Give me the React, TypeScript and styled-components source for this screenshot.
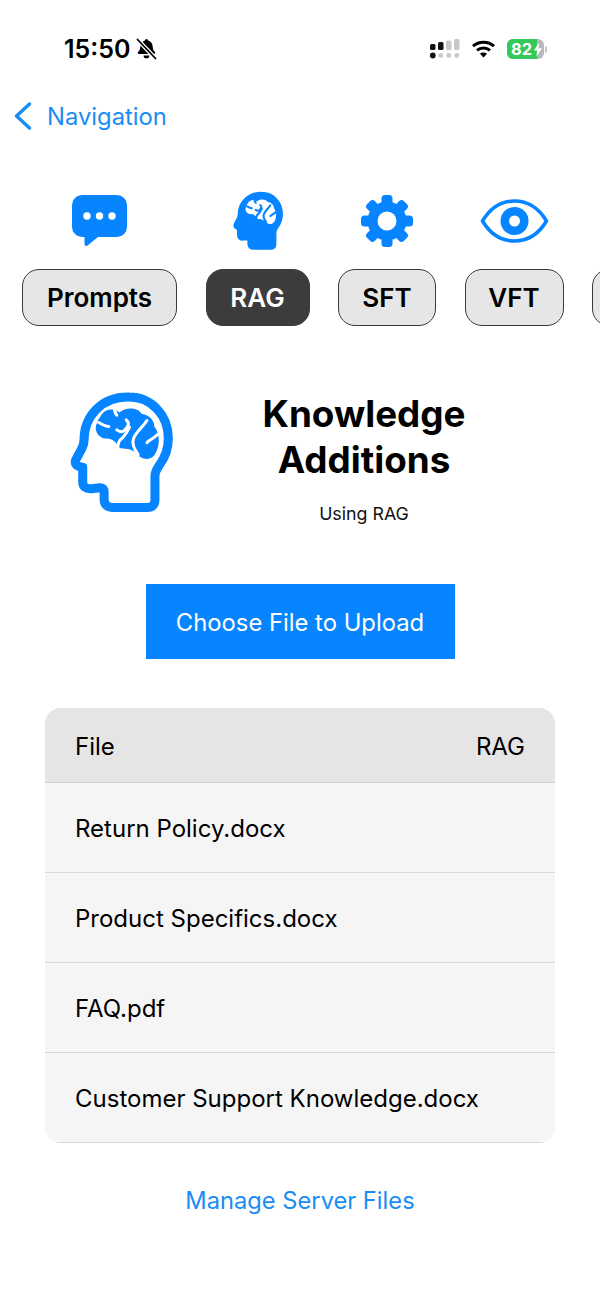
import * as React from "react";
import styled, { createGlobalStyle } from "styled-components";

const blue = "#0784ff";
const linkBlue = "#1a8cf3";

const GlobalStyle = createGlobalStyle`
  html, body {
    margin: 0;
    padding: 0;
    background: #ffffff;
    font-family: Inter, "Liberation Sans", sans-serif;
    color: #000000;
  }
`;

const Screen = styled.div`
  width: 600px;
  height: 1299px;
  overflow: hidden;
  display: flex;
  flex-direction: column;
`;

const StatusBar = styled.div`
  height: 38px;
  padding: 30px 53px 0 64px;
  display: flex;
  align-items: center;
  justify-content: space-between;
`;

const StatusLeft = styled.div`
  display: flex;
  align-items: center;
  gap: 6px;
`;

const Time = styled.span`
  font-size: 25px;
  font-weight: 600;
`;

const StatusRight = styled.div`
  display: flex;
  align-items: center;
  gap: 11px;
`;

const Battery = styled.div`
  position: relative;
  width: 37px;
  height: 20px;
  border-radius: 6px;
  overflow: hidden;
  background: #b8b8b8;
  display: flex;
`;

const BatteryFill = styled.div`
  width: 82%;
  background: #34c759;
`;

const BatteryText = styled.span`
  position: absolute;
  left: 4px;
  top: 0;
  line-height: 20px;
  font-size: 16.5px;
  font-weight: 700;
  color: #ffffff;
`;

const BatteryWrap = styled.div`
  display: flex;
  align-items: center;
  gap: 1px;
`;

const BatteryNub = styled.div`
  width: 2px;
  height: 7px;
  border-radius: 0 2px 2px 0;
  background: #c4c4c4;
`;

const NavBar = styled.div`
  margin-top: 26px;
  height: 44px;
  padding-left: 14px;
  display: flex;
  align-items: center;
  gap: 15px;
  color: ${linkBlue};
  font-size: 23.8px;
`;

const TabStrip = styled.div`
  margin-top: 51px;
  padding-left: 22px;
  display: flex;
  gap: 28.5px;
  width: 700px;
`;

const Tab = styled.div`
  display: flex;
  flex-direction: column;
  align-items: center;
  gap: 17px;
`;

const TabIcon = styled.div`
  height: 63px;
  display: flex;
  align-items: center;
  justify-content: center;
`;

const Chip = styled.div<{ $active?: boolean; $width: number }>`
  box-sizing: border-box;
  width: ${(p) => p.$width}px;
  height: 57px;
  border-radius: 17px;
  border: 1.5px solid ${(p) => (p.$active ? "#3c3c3c" : "#3a3a3a")};
  background: ${(p) => (p.$active ? "#3c3c3c" : "#e6e6e6")};
  color: ${(p) => (p.$active ? "#ffffff" : "#000000")};
  font-size: 26px;
  font-weight: 600;
  display: flex;
  align-items: center;
  justify-content: center;
`;

const Hero = styled.div`
  margin-top: 64px;
  height: 125px;
  padding-left: 70px;
  display: flex;
  align-items: center;
`;

const HeroText = styled.div`
  width: 326px;
  margin-left: 28px;
  padding-top: 11px;
  display: flex;
  flex-direction: column;
  align-items: center;
`;

const HeroTitle = styled.h1`
  margin: 0;
  font-size: 36.8px;
  line-height: 46px;
  font-weight: 700;
  text-align: center;
`;

const HeroSub = styled.div`
  margin-top: 20px;
  font-size: 17.8px;
  line-height: 22px;
  color: #111111;
`;

const UploadButton = styled.button`
  align-self: center;
  margin-top: 69px;
  width: 309px;
  height: 75px;
  padding: 2px 0 0;
  border: none;
  background: ${blue};
  color: #ffffff;
  font-family: inherit;
  font-size: 23.8px;
`;

const FileTable = styled.div`
  margin: 49px 45px 0;
  border-radius: 16px;
  overflow: hidden;
  background: #f5f5f5;
`;

const HeaderRow = styled.div`
  box-sizing: border-box;
  height: 75px;
  padding: 2px 30px 0;
  display: flex;
  align-items: center;
  justify-content: space-between;
  background: #e5e5e5;
  border-bottom: 1px solid #d4d4d4;
  font-size: 24px;
`;

const FileRow = styled.div`
  box-sizing: border-box;
  height: 90px;
  padding: 1px 30px 0;
  display: flex;
  align-items: center;
  border-bottom: 1px solid #d9d9d9;
  font-size: 24px;
`;

const ManageLink = styled.a`
  margin-top: 42px;
  text-align: center;
  color: ${linkBlue};
  font-size: 23.7px;
  line-height: 32px;
`;

const BellSlash = () => (
  <svg width="21" height="22" viewBox="0 0 21 22">
    <path
      d="M10.5 1a1.6 1.6 0 0 1 1.6 1.6c3 .8 4.4 3.2 4.6 6.2.1 2.6 1 4 2.3 5.3.6.7.2 1.9-.9 1.9H2.9c-1.1 0-1.5-1.2-.9-1.9 1.3-1.3 2.2-2.7 2.3-5.3.2-3 1.6-5.4 4.6-6.2A1.6 1.6 0 0 1 10.5 1z"
      fill="#000"
    />
    <path d="M7.6 17.4h5.8a2.9 2.9 0 0 1-5.8 0z" fill="#000" />
    <path d="M1.5 1.5l18 19" stroke="#fff" strokeWidth="4" />
    <path d="M1.5 1.5l18 19" stroke="#000" strokeWidth="1.8" strokeLinecap="round" />
  </svg>
);

const SignalDots = () => (
  <svg width="30" height="20" viewBox="0 0 30 20">
    <rect x="0" y="5" width="5.5" height="6" rx="1.5" fill="#111" />
    <rect x="8" y="3" width="5.5" height="8" rx="1.5" fill="#111" />
    <rect x="16" y="1.5" width="5.5" height="9.5" rx="1.5" fill="#c8c8c8" />
    <rect x="24" y="0" width="5.5" height="11" rx="1.5" fill="#c8c8c8" />
    <circle cx="2.75" cy="16.5" r="2.9" fill="#111" />
    <circle cx="10.75" cy="16.5" r="2.4" fill="#c8c8c8" />
    <circle cx="18.75" cy="16.5" r="2.4" fill="#c8c8c8" />
    <circle cx="26.75" cy="16.5" r="2.4" fill="#c8c8c8" />
  </svg>
);

const Wifi = () => (
  <svg width="25" height="18" viewBox="0 0 25 18" fill="none" stroke="#000" strokeWidth="3">
    <path d="M2 6.2C7.8.9 17.2.9 23 6.2" />
    <path d="M6 10.4c3.6-3.2 9.4-3.2 13 0" />
    <path d="M12.5 17.6l-3.6-3.9c2-1.6 5.2-1.6 7.2 0z" fill="#000" stroke="none" />
  </svg>
);

const Bolt = () => (
  <svg width="8" height="15" viewBox="0 0 9 16" style={{ position: "absolute", left: 27, top: 2.5 }}>
    <path d="M5.5 0L0 9h3.5L2.8 16 9 6.5H5z" fill="#fff" />
  </svg>
);

const Chevron = () => (
  <svg width="18" height="28" viewBox="0 0 18 28" fill="none">
    <path d="M15.5 2L2.5 14l13 12" stroke={linkBlue} strokeWidth="3.4" strokeLinecap="round" strokeLinejoin="round" />
  </svg>
);

const ChatIcon = () => (
  <svg width="55" height="52" viewBox="0 0 55 52">
    <path
      d="M10 0h35a10 10 0 0 1 10 10v22a10 10 0 0 1-10 10H26L15.5 50.5c-1.3 1-3 .2-3-1.5V42H10A10 10 0 0 1 0 32V10A10 10 0 0 1 10 0z"
      fill={blue}
    />
    <circle cx="15" cy="21" r="3.7" fill="#fff" />
    <circle cx="27.5" cy="21" r="3.7" fill="#fff" />
    <circle cx="40" cy="21" r="3.7" fill="#fff" />
  </svg>
);

const headPath =
  "M235 52C152 50 100 110 100 180C100 192 97 200 90 212L76 238C70 250 76 260 96 262V305C96 320 106 328 122 326L148 323C156 322 160 328 160 336V358C160 374 170 382 186 382H290C304 382 312 374 312 360V288C312 274 318 266 326 254C344 230 352 205 352 175C352 105 300 52 235 52Z";

const brainPath =
  "M148 112C160 84 190 84 206 98C226 80 262 84 272 102C296 106 310 122 310 140C328 160 328 202 310 226C294 246 266 236 254 218C240 206 222 206 204 204C198 188 186 176 166 176C144 176 126 150 140 128C140 122 144 116 148 112Z";

const HeadBrain = ({ size, filled }: { size: number; filled?: boolean }) => {
  const crease = filled ? blue : "#fff";
  return (
    <svg width={size} height={size * 1.19} viewBox="58 36 308 362">
      <path
        d={headPath}
        fill={filled ? blue : "#fff"}
        stroke={blue}
        strokeWidth="27"
        strokeLinejoin="round"
      />
      <path d={brainPath} fill={filled ? "#fff" : blue} />
      <g fill="none" stroke={crease} strokeWidth={filled ? 13 : 9} strokeLinecap="round" strokeLinejoin="round">
        <path d="M144 128C154 134 162 140 174 140" />
        <path d="M192 84C190 94 192 100 198 106" />
        <path d="M198 150C206 156 216 158 222 150C232 140 238 130 226 120" />
        <path d="M236 142C228 156 222 170 208 180C202 188 200 198 202 210" />
        <path d="M288 122C276 142 256 154 248 176C242 192 250 208 262 224" />
        <path d="M320 164C308 176 298 178 288 188" />
      </g>
    </svg>
  );
};

const GearIcon = () => (
  <svg width="54" height="54" viewBox="-27 -27 54 54">
    {[0, 45, 90, 135, 180, 225, 270, 315].map((a) => (
      <rect key={a} x="-5.5" y="-26" width="11" height="14" rx="3.5" fill={blue} transform={`rotate(${a})`} />
    ))}
    <circle r="19.5" fill={blue} />
    <circle r="9.5" fill="#fff" />
  </svg>
);

const EyeIcon = () => (
  <svg width="69" height="44" viewBox="0 0 69 44">
    <path
      d="M2.5 22C10 9.5 21 2 34.5 2S59 9.5 66.5 22C59 34.5 48 42 34.5 42S10 34.5 2.5 22Z"
      fill="none"
      stroke={blue}
      strokeWidth="3.6"
      strokeLinejoin="round"
    />
    <circle cx="34.5" cy="22" r="14" fill={blue} />
    <circle cx="34.5" cy="22" r="5.5" fill="#fff" />
  </svg>
);

const tabs = [
  { label: "Prompts", width: 155, icon: <ChatIcon /> },
  { label: "RAG", width: 104, icon: <HeadBrain size={50} filled />, active: true },
  { label: "SFT", width: 98, icon: <GearIcon /> },
  { label: "VFT", width: 99, icon: <EyeIcon /> },
  { label: "", width: 99, icon: null },
];

const files = [
  "Return Policy.docx",
  "Product Specifics.docx",
  "FAQ.pdf",
  "Customer Support Knowledge.docx",
];

const App = () => (
  <Screen>
    <GlobalStyle />
    <StatusBar>
      <StatusLeft>
        <Time>15:50</Time>
        <BellSlash />
      </StatusLeft>
      <StatusRight>
        <SignalDots />
        <Wifi />
        <BatteryWrap>
          <Battery>
            <BatteryFill />
            <BatteryText>82</BatteryText>
            <Bolt />
          </Battery>
          <BatteryNub />
        </BatteryWrap>
      </StatusRight>
    </StatusBar>
    <NavBar>
      <Chevron />
      Navigation
    </NavBar>
    <TabStrip>
      {tabs.map((t, i) => (
        <Tab key={i}>
          <TabIcon>{t.icon}</TabIcon>
          <Chip $width={t.width} $active={t.active}>
            {t.label}
          </Chip>
        </Tab>
      ))}
    </TabStrip>
    <Hero>
      <HeadBrain size={103} />
      <HeroText>
        <HeroTitle>
          Knowledge
          <br />
          Additions
        </HeroTitle>
        <HeroSub>Using RAG</HeroSub>
      </HeroText>
    </Hero>
    <UploadButton>Choose File to Upload</UploadButton>
    <FileTable>
      <HeaderRow>
        <span>File</span>
        <span>RAG</span>
      </HeaderRow>
      {files.map((f) => (
        <FileRow key={f}>{f}</FileRow>
      ))}
    </FileTable>
    <ManageLink>Manage Server Files</ManageLink>
  </Screen>
);

export default App;
